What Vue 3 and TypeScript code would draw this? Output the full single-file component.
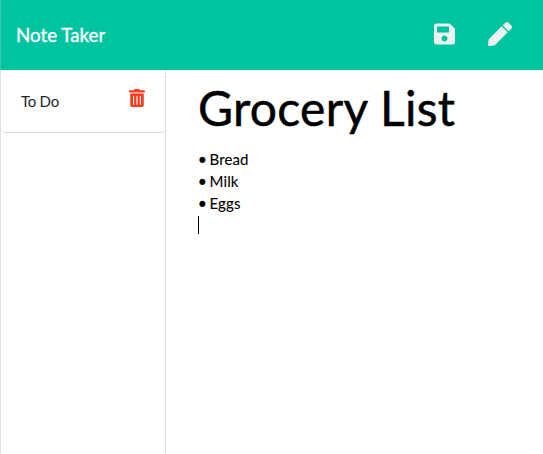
<script setup lang="ts">
import { ref } from 'vue'

interface Note {
  title: string
  lines: string[]
}

const savedNotes = ref<string[]>(['To Do'])
const draft = ref<Note>({ title: 'Grocery List', lines: ['Bread', 'Milk', 'Eggs'] })
</script>

<template>
  <div class="page">
    <nav class="navbar">
      <span class="brand">Note Taker</span>
      <div class="actions">
        <svg class="save" viewBox="0 0 448 512">
          <path d="M433.941 129.941l-83.882-83.882A48 48 0 0 0 316.118 32H48C21.49 32 0 53.49 0 80v352c0 26.51 21.49 48 48 48h352c26.51 0 48-21.49 48-48V163.882a48 48 0 0 0-14.059-33.941zM224 416c-35.346 0-64-28.654-64-64 0-35.346 28.654-64 64-64s64 28.654 64 64c0 35.346-28.654 64-64 64zm96-304.52V212c0 6.627-5.373 12-12 12H76c-6.627 0-12-5.373-12-12V108c0-6.627 5.373-12 12-12h228.52c3.183 0 6.235 1.264 8.485 3.515l3.48 3.48A11.996 11.996 0 0 1 320 111.48z" />
        </svg>
        <svg class="pen" viewBox="0 0 512 512">
          <path d="M290.74 93.24l128.02 128.02-277.99 277.99-114.14 12.6C11.35 513.54-1.56 500.62.14 485.34l12.7-114.22 277.9-277.88zm207.2-19.06l-60.11-60.11c-18.75-18.75-49.16-18.75-67.91 0l-56.55 56.55 128.02 128.02 56.55-56.55c18.75-18.76 18.75-49.16 0-67.91z" />
        </svg>
      </div>
    </nav>
    <main class="body">
      <aside class="sidebar">
        <ul class="notes">
          <li v-for="note in savedNotes" :key="note" class="note">
            <span class="name">{{ note }}</span>
            <svg class="trash" viewBox="0 0 448 512">
              <path d="M32 464a48 48 0 0 0 48 48h288a48 48 0 0 0 48-48V128H32zm272-256a16 16 0 0 1 32 0v224a16 16 0 0 1-32 0zm-96 0a16 16 0 0 1 32 0v224a16 16 0 0 1-32 0zm-96 0a16 16 0 0 1 32 0v224a16 16 0 0 1-32 0zM432 32H312l-9.4-18.7A24 24 0 0 0 281.1 0H166.8a23.72 23.72 0 0 0-21.4 13.3L136 32H16A16 16 0 0 0 0 48v32a16 16 0 0 0 16 16h416a16 16 0 0 0 16-16V48a16 16 0 0 0-16-16z" />
            </svg>
          </li>
        </ul>
      </aside>
      <section class="editor">
        <h1 class="title">{{ draft.title }}</h1>
        <div v-for="line in draft.lines" :key="line" class="line"><span class="bullet">•</span> {{ line }}</div>
        <div class="caret"></div>
      </section>
    </main>
  </div>
</template>

<style>
body {
  background: #fff;
}
</style>

<style scoped>
.page {
  box-sizing: border-box;
  display: flex;
  flex-direction: column;
  height: 100vh;
  overflow: hidden;
  font-family: Lato, sans-serif;
  font-size: 15px;
  color: #212529;
}

.navbar {
  box-sizing: border-box;
  display: flex;
  flex: none;
  align-items: center;
  justify-content: space-between;
  height: 70px;
  padding: 0 31px 0 15px;
  border-left: 1px solid #3bcdae;
  background: #00c49f;
  color: #fff;
}

.brand {
  font-size: 18.75px;
  line-height: 28px;
  -webkit-text-stroke: 0.35px currentColor;
}

.actions {
  display: flex;
  align-items: flex-start;
  gap: 33px;
  margin-top: -2px;
  fill: #ecf0f1;
}

.save {
  width: 21px;
  height: 24px;
}

.pen {
  width: 24px;
  height: 24px;
}

.body {
  display: flex;
  flex: 1;
}

.sidebar {
  box-sizing: border-box;
  width: 166px;
  border: solid #dfdfdf;
  border-width: 0 1px;
}

.notes {
  margin: 0;
  padding: 0;
  list-style: none;
}

.note {
  box-sizing: border-box;
  display: flex;
  align-items: flex-start;
  justify-content: space-between;
  height: 63px;
  padding: 20px 20px 0;
  border-bottom: 1px solid #dfdfdf;
  border-radius: 0 0 4px 4px;
  line-height: 22.5px;
}

.name {
  letter-spacing: -0.25px;
}

.trash {
  width: 16px;
  height: 18px;
  margin-top: -0.7px;
  fill: #f93a1d;
}

.editor {
  flex: 1;
  padding: 9px 32px 0;
  color: #000;
}

.title {
  margin: 0 0 11px;
  font-size: 48px;
  font-weight: 400;
  letter-spacing: 0.3px;
  line-height: 58px;
  -webkit-text-stroke: 0.5px currentColor;
}

.line {
  letter-spacing: 0.1px;
  line-height: 22px;
  -webkit-text-stroke: 0.1px currentColor;
}

.bullet {
  margin-right: -1.2px;
  -webkit-text-stroke: 0.4px currentColor;
}

.caret {
  width: 1px;
  height: 18px;
  margin-top: 2px;
  background: #000;
}
</style>
